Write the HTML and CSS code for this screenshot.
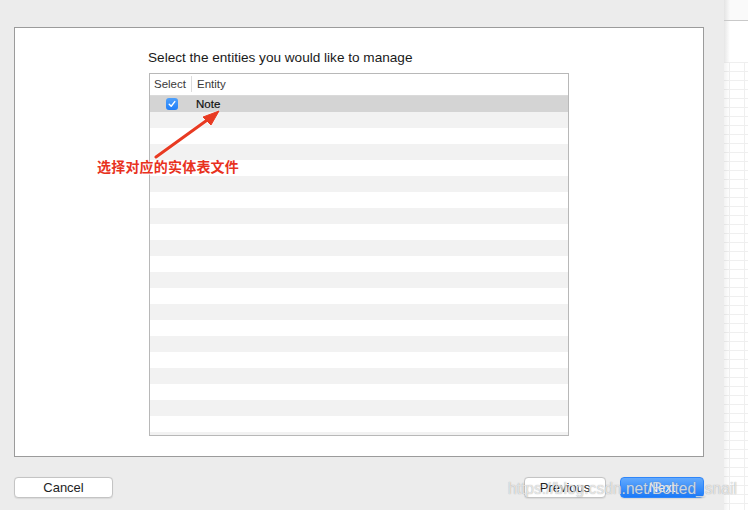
FILE: index.html
```html
<!DOCTYPE html>
<html>
<head>
<meta charset="utf-8">
<link rel="stylesheet" href="styles.css">
</head>
<body>
<div class="screen">
  <div class="window">
    <div class="panel">
      <div class="title">Select the entities you would like to manage</div>
      <div class="table">
        <div class="thead">
          <div class="th th-select">Select</div>
          <div class="th th-entity">Entity</div>
        </div>
        <div class="row selected">
          <div class="cell cell-select"><span class="check"><svg width="8" height="8" viewBox="0 0 8 8"><path d="M1.2 4.2 L3.2 6.2 L6.8 1.6" fill="none" stroke="#fff" stroke-width="1.4" stroke-linecap="round" stroke-linejoin="round"/></svg></span></div>
          <div class="cell cell-entity">Note</div>
        </div>
        <div class="stripes"></div>
      </div>
      <svg class="arrow" width="80" height="60" viewBox="0 0 80 60">
        <g fill="#e83a22" stroke="#e83a22">
          <line x1="4" y1="52" x2="58" y2="13" stroke-width="3" stroke-linecap="round"/>
          <polygon points="67,6 51,12 59,20" stroke-width="1" stroke-linejoin="round"/>
        </g>
      </svg>
      <div class="annotation">选择对应的实体表文件</div>
    </div>
    <div class="footer">
      <button class="btn">Cancel</button>
      <div class="spacer"></div>
      <button class="btn btn-prev">Previous</button>
      <button class="btn btn-primary">Next</button>
    </div>
  </div>
  <div class="side">
    <div class="side-top"></div>
    <div class="side-gap"></div>
    <div class="side-grid"></div>
  </div>
  <div class="watermark">https://blog.csdn.net/Bolted_snail</div>
</div>
</body>
</html>
```
FILE: styles.css
```css
html, body {
  margin: 0;
  padding: 0;
}
body {
  width: 748px;
  height: 510px;
  overflow: hidden;
  font-family: "Liberation Sans", Arial, "Noto Sans CJK SC", sans-serif;
  color: #1e1e1e;
}
.screen {
  position: relative;
  display: flex;
  width: 748px;
  height: 510px;
}
.window {
  width: 724px;
  height: 510px;
  background: #ececec;
  display: flex;
  flex-direction: column;
  box-sizing: border-box;
  padding: 27px 20px 0 14px;
}
.panel {
  position: relative;
  width: 690px;
  height: 430px;
  box-sizing: border-box;
  background: #fff;
  border: 1px solid #9b9b9b;
  padding: 20px 0 0 134px;
  display: flex;
  flex-direction: column;
}
.title {
  font-size: 13.6px;
  line-height: 18px;
  height: 18px;
  color: #1a1a1a;
  margin-left: -1px;
  margin-top: 1px;
}
.table {
  margin-top: 6px;
  width: 420px;
  height: 363px;
  box-sizing: border-box;
  border: 1px solid #b8b8b8;
  display: flex;
  flex-direction: column;
  overflow: hidden;
}
.thead {
  height: 22px;
  flex: none;
  box-sizing: border-box;
  border-bottom: 1px solid #dadada;
  display: flex;
  align-items: center;
  padding-bottom: 1px;
  font-size: 11.5px;
  color: #3a3a3a;
}
.th {
  height: 16px;
  line-height: 16px;
}
.th-select {
  width: 42px;
  padding-left: 4px;
  box-sizing: border-box;
  border-right: 1px solid #dcdcdc;
}
.th-entity {
  padding-left: 5px;
}
.row {
  height: 16px;
  flex: none;
  display: flex;
  align-items: center;
  font-size: 11px;
}
.row.selected {
  background: #d4d4d4;
}
.cell-select {
  width: 46px;
  display: flex;
  justify-content: center;
}
.check {
  width: 12px;
  height: 12px;
  border-radius: 3px;
  background: linear-gradient(#4fa0fb, #1f7ef8);
  display: flex;
  align-items: center;
  justify-content: center;
  margin-left: -3px;
}
.cell-entity {
  color: #111;
  font-size: 11.5px;
  -webkit-text-stroke: 0.2px #111;
}
.stripes {
  flex: 1;
  background: repeating-linear-gradient(#f2f2f2 0 16px, #ffffff 16px 32px);
}
.arrow {
  position: absolute;
  left: 137px;
  top: 77px;
  overflow: visible;
  filter: drop-shadow(0 0 1px rgba(255,255,255,0.9));
}
.annotation {
  position: absolute;
  left: 82px;
  top: 129px;
  font-family: "Noto Sans CJK SC", sans-serif;
  font-weight: 700;
  font-size: 14px;
  line-height: 18px;
  letter-spacing: 0.2px;
  color: #e8321e;
  text-shadow: 0 0 1px #fff, 0 0 1px #fff, 1px 1px 0 rgba(255,255,255,0.8);
}
.footer {
  display: flex;
  align-items: center;
  margin-top: 20px;
  height: 21px;
}
.spacer {
  flex: 1;
}
.btn {
  height: 21px;
  box-sizing: border-box;
  border: 1px solid #c4c4c4;
  border-radius: 4px;
  background: #fff;
  font-family: "Liberation Sans", Arial, sans-serif;
  font-size: 13px;
  color: #1e1e1e;
  padding: 0;
  width: 99px;
  line-height: 19px;
  box-shadow: 0 0.5px 1px rgba(0,0,0,0.08);
}
.btn-prev {
  width: 82px;
}
.btn-primary {
  width: 84px;
  margin-left: 14px;
  border-color: #2f86f9;
  background: linear-gradient(#63aafd, #1b7af9);
  color: #fff;
}
.side {
  width: 24px;
  height: 510px;
  display: flex;
  flex-direction: column;
  background: #fff;
  box-shadow: inset 6px 0 6px -4px rgba(0,0,0,0.12);
}
.side-top {
  height: 20px;
  border-bottom: 1px solid #c9c9c9;
  background: linear-gradient(90deg, #e4e4e4, #fafafa 6px);
}
.side-gap {
  height: 41px;
  background: linear-gradient(90deg, #e6e6e6, #fff 6px);
}
.side-grid {
  flex: 1;
  background:
    linear-gradient(90deg, rgba(0,0,0,0.05), rgba(0,0,0,0) 6px),
    repeating-linear-gradient(180deg, #efefef 0 1px, transparent 1px 9px),
    repeating-linear-gradient(90deg, transparent 0 5px, #efefef 5px 6px, transparent 6px 15px),
    #fff;
}
.watermark {
  position: absolute;
  left: 508px;
  top: 479px;
  font-family: "Liberation Sans", Arial, sans-serif;
  font-size: 15.6px;
  line-height: 20px;
  color: rgba(255,255,255,0.7);
  text-shadow: 0 0 1px rgba(110,110,110,0.7);
  white-space: nowrap;
}
```
